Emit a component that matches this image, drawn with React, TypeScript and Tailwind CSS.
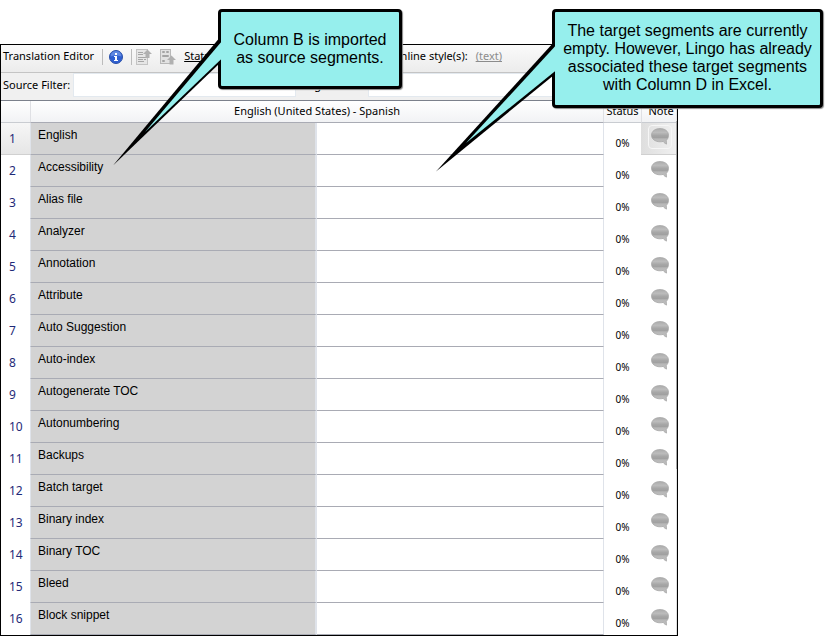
import React, { FC, ReactNode, useState, ChangeEvent } from "react";

const segments = [
  "English",
  "Accessibility",
  "Alias file",
  "Analyzer",
  "Annotation",
  "Attribute",
  "Auto Suggestion",
  "Auto-index",
  "Autogenerate TOC",
  "Autonumbering",
  "Backups",
  "Batch target",
  "Binary index",
  "Binary TOC",
  "Bleed",
  "Block snippet",
];

const InfoIcon: FC = () => (
  <svg width="14" height="14" viewBox="0 0 14 14">
    <circle cx="7" cy="7" r="6.5" fill="#2f5fd0" stroke="#2a50a8" />
    <path d="M1.5 6.5a5.5 5.5 0 0 1 11 0q-5.5 -2 -11 0z" fill="#5f88e2" />
    <rect x="6" y="3" width="2" height="2" fill="#fff" />
    <path d="M5 6h3v4h1v1H5v-1h1V7H5z" fill="#fff" />
  </svg>
);

const PageUpIcon: FC = () => (
  <svg width="16" height="16" viewBox="0 0 16 16">
    <rect x="0.5" y="0.5" width="11" height="15" fill="#e6e6e6" stroke="#c4c4c4" />
    <path d="M2 3.5h5M2 5.5h5M2 8.5h8M2 10.5h5M8 10.5h2M2 12.5h6" stroke="#a6a6a6" />
    <path d="M11.5 0.5l4.5 4.5h-2.5v4h-4v-4h-2.5z" fill="#b0b0b0" />
  </svg>
);

const RowsUpIcon: FC = () => (
  <svg width="16" height="16" viewBox="0 0 16 16">
    <rect x="0.5" y="0.5" width="10" height="14" fill="#e2e2e2" stroke="#b8b8b8" />
    <path
      d="M2.5 2.5h2v1h-2zM6.5 2.5h2v1h-2zM2.5 6.5h6v1h-6zM2.5 11.5h2v1h-2z"
      fill="none"
      stroke="#a4a4a4"
    />
    <path d="M11.5 6.5l4.5 4.5h-2.5v4.5h-4v-4.5h-2.5z" fill="#b0b0b0" />
  </svg>
);

const NoteIcon: FC = () => (
  <svg width="18" height="17" viewBox="0 0 18 17">
    <defs>
      <linearGradient id="note" x1="0" y1="0" x2="0" y2="1">
        <stop offset="0" stopColor="#acacac" />
        <stop offset="0.25" stopColor="#bcbcbc" />
        <stop offset="0.45" stopColor="#a6a6a6" />
        <stop offset="0.6" stopColor="#a0a0a0" />
        <stop offset="0.66" stopColor="#b8b8b8" />
        <stop offset="1" stopColor="#bebebe" />
      </linearGradient>
    </defs>
    <path
      d="M9 0.5c4.9 0 8.5 2.8 8.5 6.7c0 2.4-1 4-2.2 5l0.2 3.9c-1.5-0.7-2.7-1.6-3.3-2.7c-1 0.3-2.1 0.4-3.2 0.4c-4.9 0-8.5-2.9-8.5-6.6c0-3.9 3.6-6.7 8.5-6.7z"
      fill="url(#note)"
      stroke="#a8a8a8"
      strokeWidth="0.8"
    />
  </svg>
);

const Toolbar: FC = () => (
  <div className="flex h-7 items-center border-b border-[#c4c4c4] bg-linear-to-b from-[#fafafa] to-[#ececec] pl-0.5 pb-1">
    <h1 className="whitespace-nowrap">Translation Editor</h1>
    <span className="ml-2 h-4 w-px bg-[#bcbcbc]" />
    <button type="button" aria-label="Information" className="ml-1.5">
      <InfoIcon />
    </button>
    <span className="ml-2 h-4 w-px bg-[#bcbcbc]" />
    <button type="button" aria-label="Previous segment" className="ml-1">
      <PageUpIcon />
    </button>
    <button type="button" aria-label="Next segment" className="ml-2">
      <RowsUpIcon />
    </button>
    <button type="button" className="ml-2 underline">
      Status:
    </button>
    <div className="ml-auto flex gap-2 whitespace-nowrap pr-[175px]">
      <span>Inline style(s):</span>
      <a href="#text" className="text-[#8c8c8c] underline">
        (text)
      </a>
    </div>
  </div>
);

const Filters: FC = () => {
  const [filters, setFilters] = useState({ source: "", target: "" });

  function handleChange(e: ChangeEvent<HTMLInputElement>) {
    const { name, value } = e.target;
    setFilters({ ...filters, [name]: value });
  }

  return (
    <div className="flex h-7 items-start border-b border-[#7c818c] bg-[#f0f0f0] leading-6">
      <label htmlFor="source" className="w-[72px] shrink-0 whitespace-nowrap pl-0.5">
        Source Filter:
      </label>
      <input
        id="source"
        name="source"
        type="text"
        value={filters.source}
        onChange={handleChange}
        className="h-6 min-w-0 flex-5 border border-[#e3e9ef] bg-white px-1 outline-none"
      />
      <label htmlFor="target" className="w-[72px] shrink-0 whitespace-nowrap pl-0.5">
        Target Filter:
      </label>
      <input
        id="target"
        name="target"
        type="text"
        value={filters.target}
        onChange={handleChange}
        className="h-6 min-w-0 flex-7 border border-[#e3e9ef] bg-white px-1 outline-none"
      />
    </div>
  );
};

interface RowProps {
  number: number;
  source: string;
  selected: boolean;
}

const SegmentRow: FC<RowProps> = ({ number, source, selected }) => {
  const [target, setTarget] = useState("");
  const selectedCell = selected
    ? "border-b border-[#d0d0d0] bg-linear-to-b from-[#f6f6f6] to-[#e6e6e6]"
    : "";
  const selectedNote = selected
    ? "border-b border-[#d0d0d0] bg-linear-to-r from-[#dedede] to-[#f0f0f0]"
    : "";

  return (
    <tr className="h-8">
      <td className={`p-0 pl-2 text-left text-xs text-[#1f2a78] ${selectedCell}`}>
        {number}
      </td>
      <td className="border-r-2 border-b border-l border-r-[#dfe3ea] border-b-[#a9abb4] border-l-[#dfe3ea] bg-[#d3d3d3] p-0 pb-2 pl-[7px] font-['Liberation_Sans',Arial,sans-serif] text-xs">
        {source}
      </td>
      <td className="border-r border-b border-r-[#dfe3ea] border-b-[#a9abb4] p-0">
        <input
          type="text"
          aria-label={`Translation of ${source}`}
          value={target}
          onChange={(e) => setTarget(e.target.value)}
          className="block h-6 w-full bg-white px-2 outline-none"
        />
      </td>
      <td className="p-0 pt-2 text-center text-[10px]">0%</td>
      <td className={`p-0 pb-1 ${selectedNote}`}>
        <button
          type="button"
          aria-label={`Note for ${source}`}
          className={`ml-[7px] flex h-6 w-6 items-center justify-center rounded-sm border ${
            selected ? "border-[#f6f6f6]" : "border-transparent"
          }`}
        >
          <NoteIcon />
        </button>
      </td>
    </tr>
  );
};

const SegmentTable: FC = () => (
  <div className="flex">
    <table className="w-full min-w-0 flex-1 table-fixed border-separate border-spacing-0">
      <colgroup>
        <col className="w-[29px]" />
        <col />
        <col />
        <col className="w-[37px]" />
        <col className="w-[35px]" />
      </colgroup>
      <thead>
        <tr className="h-[22px] bg-linear-to-b from-white to-[#f1f2f4]">
          <th className="border-b border-[#c9ccd1] p-0" />
          <th
            colSpan={2}
            className="border-x border-b border-x-[#dfe0e4] border-b-[#a9abb4] p-0 font-normal"
          >
            English (United States) - Spanish
          </th>
          <th className="border-b border-[#c9ccd1] p-0 font-normal">Status</th>
          <th className="border-b border-l border-b-[#c9ccd1] border-l-[#dfe0e4] p-0 pl-1 font-normal">
            Note
          </th>
        </tr>
      </thead>
      <tbody>
        {segments.map((source, index) => (
          <SegmentRow
            key={source}
            number={index + 1}
            source={source}
            selected={index === 0}
          />
        ))}
      </tbody>
    </table>
    <div className="flex w-px flex-col bg-[#e0e0e0]">
      <span className="mt-5 h-[348px] bg-[#a6a6a6]" />
    </div>
  </div>
);

interface CalloutProps {
  className: string;
  tail: ReactNode;
  children: ReactNode;
}

const Callout: FC<CalloutProps> = ({ className, tail, children }) => (
  <div
    className={`absolute top-[9px] flex items-center justify-center rounded-sm border-3 border-black bg-[#96efed] text-center font-['Liberation_Sans',Arial,sans-serif] text-base leading-[18px] shadow-[1px_1px_1px_#888] ${className}`}
  >
    {tail}
    <p className="whitespace-pre-line">{children}</p>
  </div>
);

const App: FC = () => {
  return (
    <main className="relative bg-white pt-11 pr-[154px] font-['Noto_Sans','Segoe_UI',sans-serif] text-[11px] text-black">
      <section className="border border-black">
        <Toolbar />
        <Filters />
        <SegmentTable />
      </section>

      <Callout
        className="left-[218px] h-[80px] w-[184px]"
        tail={
          <svg
            className="absolute top-[24px] -left-[108px]"
            width="112"
            height="132"
            viewBox="0 0 112 132"
          >
            <path d="M108 0L0 129.5L108 26z" fill="#000" />
            <path d="M112 1.5L32 96L112 19.5z" fill="#96efed" />
          </svg>
        }
      >
        {"Column B is imported\nas source segments."}
      </Callout>

      <Callout
        className="left-[552px] h-[99px] w-[271px] pb-0.5"
        tail={
          <svg
            className="absolute top-[30px] -left-[120px]"
            width="124"
            height="132"
            viewBox="0 0 124 132"
          >
            <path d="M119 0L1 129.5L119 33z" fill="#000" />
            <path d="M124 0L31 101L124 26z" fill="#96efed" />
          </svg>
        }
      >
        {
          "The target segments are currently\nempty. However, Lingo has already\nassociated these target segments\nwith Column D in Excel."
        }
      </Callout>
    </main>
  );
};

export default App;
